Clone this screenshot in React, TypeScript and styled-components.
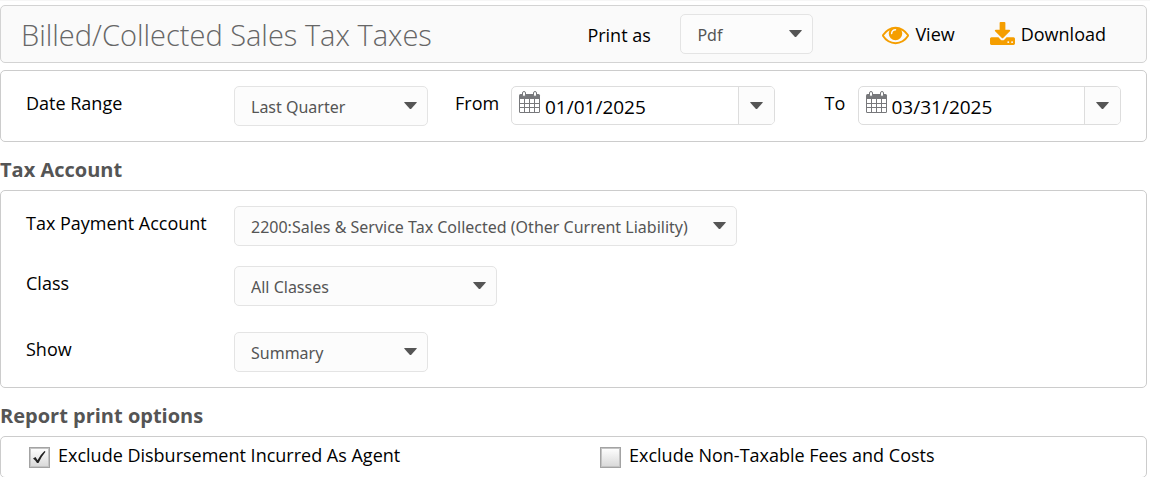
import React from "react";
import styled, { createGlobalStyle } from "styled-components";

const GlobalStyle = createGlobalStyle`
  *, *::before, *::after { box-sizing: border-box; }
  body {
    margin: 0;
    overflow-x: hidden;
    background: #fff;
    color: #000;
    font-family: "Segoe UI", "Open Sans", "Noto Sans", sans-serif;
    font-size: 18px;
  }
  button, input, select { font-family: inherit; margin: 0; }
`;

const Page = styled.main`
  display: flex;
  flex-direction: column;
  padding: 4px 3px 0 0;
  border-top: 1px solid #f6f6f6;
`;

const Panel = styled.section`
  border: 1px solid #ccc;
  border-radius: 5px;
  background: #fff;
`;

const Header = styled.header`
  display: flex;
  align-items: center;
  height: 58px;
  margin-bottom: 7px;
  padding: 0 40px 0 20px;
  border: 1px solid #d3d3d3;
  border-radius: 5px;
  background: #fafafa;
`;

const Title = styled.h1`
  flex: 1;
  margin: 0;
  padding-top: 2px;
  color: #666;
  font-size: 29px;
  font-weight: 300;
  line-height: 40px;
  white-space: nowrap;
`;

const PrintLabel = styled.label`
  width: 93px;
  padding-top: 2px;
  line-height: 24px;
  white-space: nowrap;
`;

const Actions = styled.div`
  display: flex;
  gap: 35px;
  margin-left: 69px;
`;

const Action = styled.button`
  display: flex;
  align-items: center;
  gap: 6px;
  padding: 0;
  border: 0;
  background: none;
  color: #000;
  font-size: 18px;
  line-height: 24px;
  cursor: pointer;

  svg { fill: #f59e00; }
`;

const SelectBox = styled.span<{ $width: number }>`
  position: relative;
  display: block;
  flex: none;
  width: ${(p) => p.$width}px;
  height: 40px;
`;

const SelectField = styled.select`
  appearance: none;
  width: 100%;
  height: 40px;
  padding: 2px 30px 0 16px;
  border: 1px solid #e4e4e4;
  border-radius: 5px;
  background: #fcfcfc;
  color: #555;
  font-family: "Segoe UI", "Noto Sans", sans-serif;
  font-size: 16px;
`;

const SelectCaret = styled.span`
  position: absolute;
  top: 16px;
  right: 11px;
  display: flex;
  pointer-events: none;
`;

const DatePanel = styled(Panel)`
  display: flex;
  align-items: flex-start;
  padding: 15px 25px;
`;

const Label = styled.label<{ $width: number }>`
  flex: none;
  width: ${(p) => p.$width}px;
  line-height: 34px;
  white-space: nowrap;
`;

const DateBox = styled.div`
  display: flex;
  flex: 1;
  min-width: 0;
  height: 39px;
  margin-bottom: 1px;
  border: 1px solid #ddd;
  border-radius: 5px;
  overflow: hidden;
`;

const CalendarMark = styled.span`
  flex: none;
  padding: 4px 0 0 7px;
`;

const DateInput = styled.input`
  flex: 1;
  min-width: 0;
  padding: 2px 0 0 4px;
  border: 0;
  background: none;
  color: #000;
  font-size: 19px;
  outline: none;
`;

const DateButton = styled.button`
  display: flex;
  flex: none;
  align-items: center;
  justify-content: center;
  width: 36px;
  padding: 0;
  border: 0;
  border-left: 1px solid #ddd;
  background: #fcfcfc;
  cursor: pointer;
`;

const Heading = styled.h2`
  margin: 0;
  padding: 13px 0 5px;
  color: #555;
  font-size: 20px;
  font-weight: 700;
  line-height: 30px;
`;

const AccountPanel = styled(Panel)`
  display: flex;
  flex-direction: column;
  gap: 20px;
  padding: 15px 25px;
`;

const Row = styled.div<{ $spaced?: boolean }>`
  display: flex;
  align-items: flex-start;
  margin-top: ${(p) => (p.$spaced ? 6 : 0)}px;
`;

const OptionsPanel = styled(Panel)`
  display: grid;
  grid-template-columns: 1fr 1fr;
  height: 42px;
  padding-right: 3px;
`;

const Option = styled.label`
  display: flex;
  align-items: flex-start;
  gap: 8px;
  padding: 6px 0 0 28px;
  line-height: 24px;
  white-space: nowrap;
`;

const CheckBox = styled.span`
  position: relative;
  display: block;
  width: 21px;
  height: 21px;
  margin-top: 4px;
`;

const CheckInput = styled.input`
  appearance: none;
  display: block;
  width: 21px;
  height: 21px;
  border: 1px solid #a3a3a3;
  background: linear-gradient(#fff, #d8d8d8);
  box-shadow: inset 0 0 0 1px #c4c4c4;

  & + svg { display: none; }
  &:checked + svg { display: block; }
`;

const Tick = styled.svg`
  position: absolute;
  inset: 3px;
  pointer-events: none;
`;

const Spacer = styled.span<{ $wide?: boolean }>`
  flex: none;
  width: ${(p) => (p.$wide ? 50 : 27)}px;
`;

const Caret = () => (
  <svg width="13" height="7" viewBox="0 0 13 7" aria-hidden="true">
    <path d="M0.5 0h12q.6.2.1.8L7.5 6.400q-1 1-2 0L.4.8Q-.1.2.5 0z" fill="#555" />
  </svg>
);

const EyeIcon = () => (
  <svg width="27" height="27" viewBox="0 0 1792 1792" aria-hidden="true">
    <path d="M1664 960q-152-236-381-353 61 104 61 225 0 185-131.500 316.500t-316.500 131.500-316.500-131.500-131.500-316.500q0-121 61-225-229 117-381 353 133 205 333.500 326.500t434.500 121.500 434.500-121.500 333.500-326.500zm-720-384q0-20-14-34t-34-14q-125 0-214.500 89.500t-89.500 214.500q0 20 14 34t34 14 34-14 14-34q0-86 61-147t147-61q20 0 34-14t14-34zm848 384q0 34-20 69-140 230-376.500 368.500t-499.500 138.500-499.500-139-376.500-368q-20-35-20-69t20-69q140-229 376.500-368t499.500-139 499.500 139 376.500 368q20 35 20 69z" />
  </svg>
);

const DownloadIcon = () => (
  <svg width="25" height="24" viewBox="0 0 1664 1600" aria-hidden="true">
    <path d="M1280 1344q0-26-19-45t-45-19-45 19-19 45 19 45 45 19 45-19 19-45zm256 0q0-26-19-45t-45-19-45 19-19 45 19 45 45 19 45-19 19-45zm128-224v320q0 40-28 68t-68 28h-1472q-40 0-68-28t-28-68v-320q0-40 28-68t68-28h465l135 136q58 56 136 56t136-56l136-136h464q40 0 68 28t28 68zm-325-569q17 41-14 70l-448 448q-18 19-45 19t-45-19l-448-448q-31-29-14-70 17-39 59-39h256v-448q0-26 19-45t45-19h256q26 0 45 19t19 45v448h256q42 0 59 39z" />
  </svg>
);

const CalendarIcon = () => (
  <svg width="22" height="23" viewBox="0 0 22 23" aria-hidden="true">
    <path d="M1.500 3h18q1.500 0 1.500 1.500v16q0 1.500-1.500 1.500h-18Q0 22 0 20.500v-16Q0 3 1.500 3z" fill="#77787b" />
    <path
      d="M1 8h4v4H1zM6 8h4v4H6zM11 8h4v4h-4zM16 8h4v4h-4zM1 13h4v3H1zM6 13h4v3H6zM11 13h4v3h-4zM16 13h4v3h-4zM1 17h4v4H1zM6 17h4v4H6zM11 17h4v4h-4zM16 17h4v4h-4z"
      fill="#fff"
    />
    <rect x="3.500" y="0.500" width="3" height="5" rx="1.500" fill="#fff" stroke="#77787b" />
    <rect x="14.500" y="0.500" width="3" height="5" rx="1.500" fill="#fff" stroke="#77787b" />
  </svg>
);

type SelectProps = { id: string; width: number; value: string };

const Select = ({ id, width, value }: SelectProps) => (
  <SelectBox $width={width}>
    <SelectField id={id} defaultValue={value}>
      <option>{value}</option>
    </SelectField>
    <SelectCaret>
      <Caret />
    </SelectCaret>
  </SelectBox>
);

type DatePickerProps = { id: string; value: string; name: string };

const DatePicker = ({ id, value, name }: DatePickerProps) => (
  <DateBox>
    <CalendarMark>
      <CalendarIcon />
    </CalendarMark>
    <DateInput id={id} type="text" defaultValue={value} />
    <DateButton type="button" aria-label={name}>
      <Caret />
    </DateButton>
  </DateBox>
);

const CheckOption = ({ text, checked }: { text: string; checked?: boolean }) => (
  <Option>
    <CheckBox>
      <CheckInput type="checkbox" defaultChecked={checked} />
      <Tick width="15" height="15" viewBox="0 0 15 15" aria-hidden="true">
        <path d="M1 8.500l2.500-1.500 2 3.200Q8.500 4.500 12.500 1l1 .8Q9.500 6.500 6.500 13H5Q3.500 10 1 8.500z" fill="#222" />
      </Tick>
    </CheckBox>
    {text}
  </Option>
);

export default function App() {
  return (
    <>
      <GlobalStyle />
      <Page>
        <Header>
          <Title>Billed/Collected Sales Tax Taxes</Title>
          <PrintLabel htmlFor="print-as">Print as</PrintLabel>
          <Select id="print-as" width={133} value="Pdf" />
          <Actions>
            <Action type="button">
              <EyeIcon />
              View
            </Action>
            <Action type="button">
              <DownloadIcon />
              Download
            </Action>
          </Actions>
        </Header>

        <DatePanel>
          <Label htmlFor="date-range" $width={208}>Date Range</Label>
          <Select id="date-range" width={194} value="Last Quarter" />
          <Spacer />
          <Label htmlFor="date-from" $width={56}>From</Label>
          <DatePicker id="date-from" value="01/01/2025" name="Choose start date" />
          <Spacer $wide />
          <Label htmlFor="date-to" $width={33}>To</Label>
          <DatePicker id="date-to" value="03/31/2025" name="Choose end date" />
        </DatePanel>

        <Heading>Tax Account</Heading>
        <AccountPanel>
          <Row>
            <Label htmlFor="account" $width={208}>Tax Payment Account</Label>
            <Select id="account" width={503} value="2200:Sales & Service Tax Collected (Other Current Liability)" />
          </Row>
          <Row>
            <Label htmlFor="class" $width={208}>Class</Label>
            <Select id="class" width={263} value="All Classes" />
          </Row>
          <Row $spaced>
            <Label htmlFor="show" $width={208}>Show</Label>
            <Select id="show" width={194} value="Summary" />
          </Row>
        </AccountPanel>

        <Heading>Report print options</Heading>
        <OptionsPanel>
          <CheckOption text="Exclude Disbursement Incurred As Agent" checked />
          <CheckOption text="Exclude Non-Taxable Fees and Costs" />
        </OptionsPanel>
      </Page>
    </>
  );
}
